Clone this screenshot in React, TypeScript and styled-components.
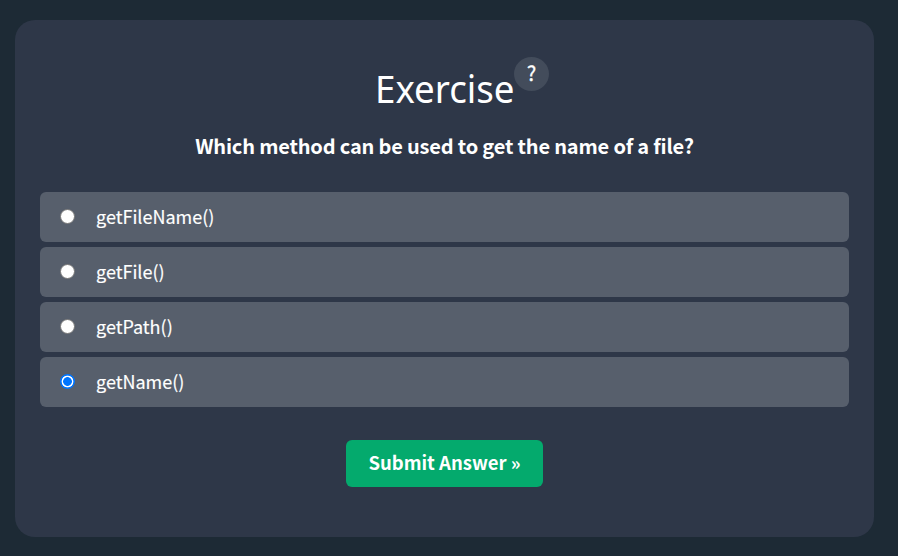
import React, { useState } from 'react';
import styled, { createGlobalStyle } from 'styled-components';

const GlobalStyle = createGlobalStyle`
  * { box-sizing: border-box; }
  body { margin: 0; background: #1d2a35; color: #fff; font-family: "Noto Sans CJK SC", sans-serif; }
`;

const Page = styled.main`
  height: 556px;
  padding: 20px 24px 0 15px;
  overflow: hidden;
`;

const Card = styled.form`
  height: 517px;
  padding: 37px 25px 0;
  border-radius: 20px;
  background: #2e3748;
  display: flex;
  flex-direction: column;
  align-items: center;
`;

const Header = styled.header`
  display: flex;
  height: 70px;
  padding-left: 36px;
  margin-left: -1px;
`;

const Title = styled.h2`
  margin: 2px 0 0;
  width: 139px;
  font-family: "Noto Sans", sans-serif;
  font-size: 39px;
  transform: scaleX(0.94);
  transform-origin: left;
  line-height: 58px;
  font-weight: 400;
  white-space: nowrap;
`;

const Help = styled.span`
  width: 35px;
  height: 34px;
  border-radius: 50%;
  background: #434c5b;
  font-size: 20px;
  line-height: 32px;
  text-align: center;
  -webkit-text-stroke: 0.3px #fff;
`;

const Question = styled.p`
  margin: 0;
  height: 65px;
  font-size: 20px;
  letter-spacing: -0.18px;
  line-height: 38px;
  font-weight: 700;
  white-space: nowrap;
`;

const Options = styled.div`
  width: 100%;
  display: grid;
  gap: 5px;
`;

const Option = styled.label`
  height: 50px;
  display: flex;
  align-items: center;
  padding: 0 0 2px 20px;
  border-radius: 6px;
  background: #575f6c;
  font-size: 18px;
  -webkit-text-stroke: 0.15px #fff;
`;

const Radio = styled.input`
  appearance: none;
  width: 15px;
  height: 15px;
  margin: 0 21px 0 0;
  border: 1px solid #767676;
  border-radius: 50%;
  background: #fff;

  &:checked {
    border: 0;
    background: radial-gradient(circle, #0075ff 4px, #fff 4.7px, #fff 5.6px, #0075ff 6.2px);
  }
`;

const Submit = styled.button`
  width: 197px;
  height: 47px;
  margin-top: 33px;
  padding: 0 0 3px;
  border: 0;
  border-radius: 6px;
  background: #04aa6d;
  color: #fff;
  font: 700 18.5px "Noto Sans CJK SC", sans-serif;
`;

const answers = ['getFileName()', 'getFile()', 'getPath()', 'getName()'];

export default function App() {
  const [selected, setSelected] = useState('getName()');
  return (
    <Page>
      <GlobalStyle />
      <Card onSubmit={(e) => e.preventDefault()}>
        <Header><Title>Exercise</Title><Help>?</Help></Header>
        <Question>Which method can be used to get the name of a file?</Question>
        <Options>
          {answers.map((a) => (
            <Option key={a}>
              <Radio type="radio" name="answer" checked={selected === a} onChange={() => setSelected(a)} />
              {a}
            </Option>
          ))}
        </Options>
        <Submit type="submit">Submit Answer »</Submit>
      </Card>
    </Page>
  );
}
